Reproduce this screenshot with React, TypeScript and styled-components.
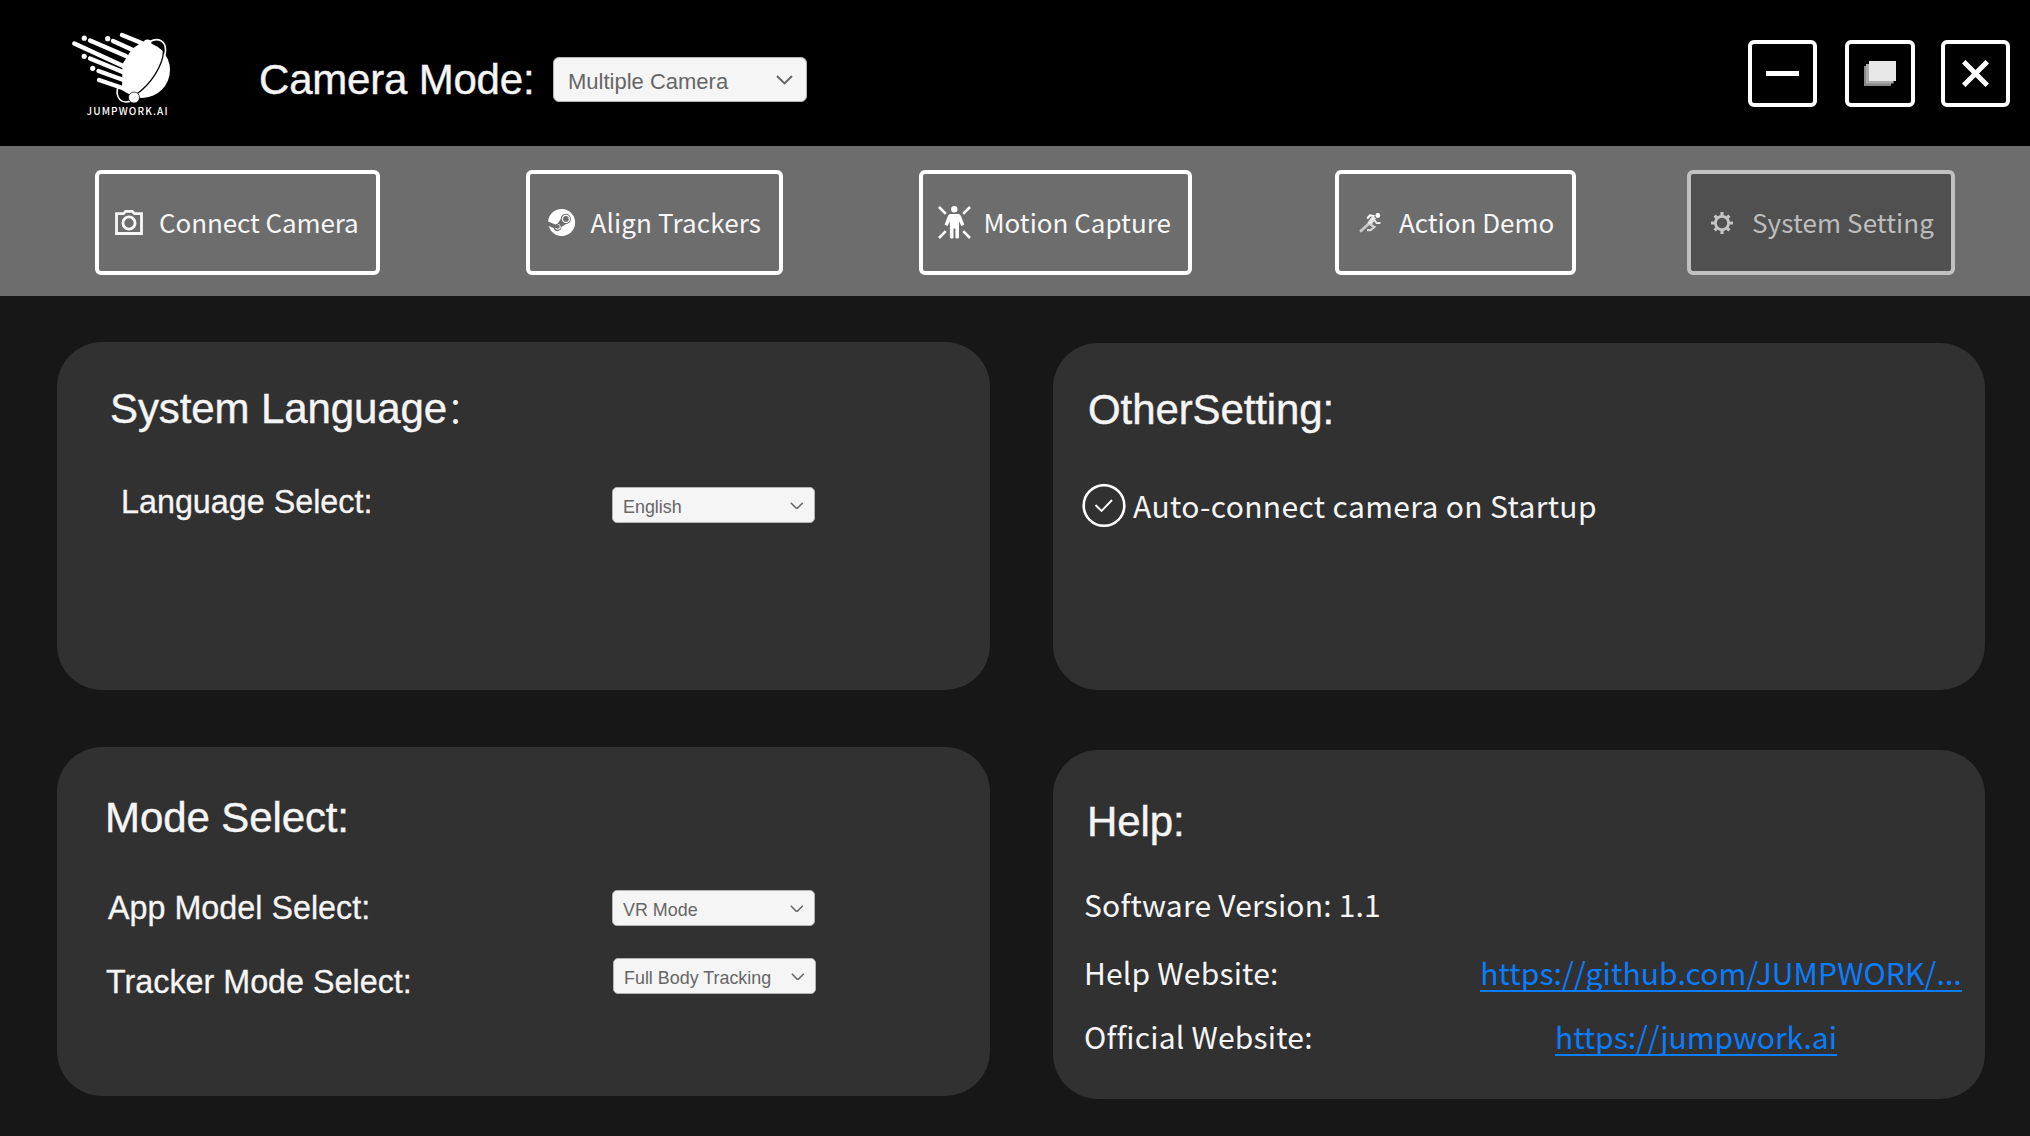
import React from "react";
import styled, { createGlobalStyle } from "styled-components";

const SANS = `"Liberation Sans", Arial, sans-serif`;
const HAN = `"Noto Sans CJK SC", "Noto Sans", sans-serif`;

const Global = createGlobalStyle`
  * { box-sizing: border-box; }
  html, body { margin: 0; padding: 0; background: #171717; }
`;

const Window = styled.div`
  width: 2030px;
  height: 1136px;
  display: flex;
  flex-direction: column;
  background: #171717;
  overflow: hidden;
  font-family: ${SANS};
  color: #f5f5f5;
  white-space: nowrap;
`;

const Header = styled.header`
  height: 146px;
  flex: none;
  background: #000;
  display: flex;
  align-items: flex-start;
`;

const Logo = styled.svg`
  width: 140px;
  height: 110px;
  margin: 20px 0 0 50px;
  flex: none;
`;

const ModeLabel = styled.div`
  width: 294px;
  margin: 55px 0 0 69px;
  font-size: 42px;
  line-height: 50px;
  letter-spacing: -0.2px;
  -webkit-text-stroke: 0.4px currentColor;
`;

const WindowButtons = styled.div`
  display: flex;
  gap: 27px;
  margin: 40px 20px 0 auto;
`;

const WindowButton = styled.button`
  width: 69px;
  height: 67px;
  padding: 0;
  border: 4px solid #fff;
  border-radius: 6px;
  background: #000;
  display: flex;
  align-items: center;
  justify-content: center;

  &:nth-child(2) {
    width: 70px;
    margin: 0 -1px 0 1px;
  }
`;

const Select = styled.div<{ $large?: boolean }>`
  width: ${(p) => (p.$large ? 254 : 203)}px;
  height: ${(p) => (p.$large ? 45 : 36)}px;
  padding: ${(p) => (p.$large ? "5px 13px 0 14px" : "4px 10px 0 10px")};
  display: flex;
  align-items: center;
  justify-content: space-between;
  flex: none;
  background: #f5f5f5;
  border: 1px solid #b4b4b4;
  border-radius: ${(p) => (p.$large ? 6 : 5)}px;
  color: #666;
  font-size: ${(p) => (p.$large ? 22 : 17.9)}px;
  line-height: 30px;

  svg {
    width: ${(p) => (p.$large ? 17 : 13.6)}px;
    margin-bottom: ${(p) => (p.$large ? 4 : 3)}px;
  }
`;

const HeaderSelect = styled.div`
  margin-top: 57px;
`;

const Nav = styled.nav`
  height: 150px;
  flex: none;
  background: #6d6d6d;
  display: flex;
  padding: 24px 0 0 95px;
`;

interface TabProps {
  $width: number;
  $after?: number;
  $pad: number;
  $gap: number;
  $spacing?: number;
  $active?: boolean;
}

const Tab = styled.button<TabProps>`
  width: ${(p) => p.$width}px;
  height: 105px;
  margin: 0 ${(p) => p.$after ?? 0}px 0 0;
  padding: 0 0 0 ${(p) => p.$pad}px;
  flex: none;
  display: flex;
  align-items: center;
  gap: ${(p) => p.$gap}px;
  border: 4px solid ${(p) => (p.$active ? "#c1c1c1" : "#fff")};
  border-radius: 6px;
  background: ${(p) => (p.$active ? "#505050" : "transparent")};
  color: ${(p) => (p.$active ? "#bdbdbd" : "#f7f7f7")};
  font-family: ${HAN};
  font-size: 26px;
  line-height: 38px;
  letter-spacing: ${(p) => p.$spacing ?? 0}px;

  svg { flex: none; display: block; }
`;

const TabText = styled.span`
  margin-top: -1px;
`;

const Panels = styled.main`
  flex: 1;
  display: flex;
  gap: 63px;
  padding-left: 57px;
`;

const Column = styled.div<{ $top: number; $gap: number }>`
  display: flex;
  flex-direction: column;
  gap: ${(p) => p.$gap}px;
  padding-top: ${(p) => p.$top}px;
`;

const Card = styled.section<{ $height: number; $width?: number }>`
  width: ${(p) => p.$width ?? 933}px;
  height: ${(p) => p.$height}px;
  flex: none;
  background: #313131;
  border-radius: 45px;
`;

const Title = styled.h2<{ $top: number; $left: number }>`
  margin: 0;
  padding: ${(p) => p.$top}px 0 0 ${(p) => p.$left}px;
  height: ${(p) => p.$top + 50}px;
  font-size: 42px;
  font-weight: 400;
  line-height: 50px;
  letter-spacing: -0.1px;
  -webkit-text-stroke: 0.4px currentColor;
`;

const WideColon = styled.span`
  margin-left: -1px;
  font-family: ${HAN};
  font-size: 38px;
  font-weight: 300;
  line-height: 1;
  -webkit-text-stroke: 0;
`;

const Row = styled.div<{ $top: number; $left: number }>`
  display: flex;
  align-items: flex-start;
  height: 40px;
  margin-top: ${(p) => p.$top}px;
  padding-left: ${(p) => p.$left}px;
`;

const Label = styled.div<{ $width: number }>`
  width: ${(p) => p.$width}px;
  flex: none;
  font-size: 32.3px;
  line-height: 40px;
  -webkit-text-stroke: 0.3px currentColor;
`;

const SelectSlot = styled.div<{ $top: number }>`
  margin-top: ${(p) => p.$top}px;
`;

const HanText = styled.div<{ $width?: number; $spacing?: number }>`
  width: ${(p) => (p.$width ? `${p.$width}px` : "auto")};
  flex: none;
  font-family: ${HAN};
  font-size: 30px;
  line-height: 40px;
  letter-spacing: ${(p) => p.$spacing ?? 0.2}px;
`;

const LinkSlot = styled.div`
  width: 482px;
  display: flex;
  justify-content: center;
`;

const Link = styled.a<{ $spacing: number }>`
  height: 40px;
  font-family: ${HAN};
  font-size: 30px;
  line-height: 40px;
  letter-spacing: ${(p) => p.$spacing}px;
  color: #0a7dff;
  border-bottom: 2px solid #0a7dff;
`;

const CheckIcon = styled.svg`
  width: 44px;
  height: 44px;
  flex: none;
  margin: -1px 7.5px 0 -0.5px;
`;

const Chevron = () => (
  <svg viewBox="0 0 17 10" fill="none" stroke="#666" strokeWidth="1.9">
    <path d="M1 1l7.500 7.500L16 1" />
  </svg>
);

const CameraIcon = () => (
  <svg width="28" height="25" viewBox="0 0 28 25" fill="none" stroke="#f7f7f7" strokeWidth="2.800">
    <path d="M1.500 3.600h7l2.200-2.300h6.600l2.200 2.300h7v19.900h-25z" />
    <circle cx="14" cy="13" r="6.100" />
  </svg>
);

const SteamIcon = () => (
  <svg width="27" height="27" viewBox="0 0 27 27">
    <path fill="#fff" d="M13.500 0A13.500 13.500 0 0 0 .1 12.400l7.200 3a3.800 3.800 0 0 1 2.200-.7l3.200-4.700A5.100 5.100 0 1 1 17.900 15l-4.600 3.300a3.800 3.800 0 0 1-7.500.9L.7 17A13.500 13.500 0 1 0 13.500 0z" />
    <circle cx="17.900" cy="9.900" r="3.500" fill="none" stroke="#fff" strokeWidth="1.300" />
    <path d="M7 18.700l2 .8a2 2 0 0 0 1.500-3.800l-1.500-.6a2.900 2.900 0 1 1-2 3.600z" fill="#fff" />
  </svg>
);

const MotionIcon = () => (
  <svg width="33" height="33" viewBox="0 0 33 33">
    <path d="M1 1l6.800 6.800M32 1l-6.800 6.800M1 32l6.800-6.800M32 32l-6.800-6.800" stroke="#fff" strokeWidth="2.600" />
    <circle cx="16.300" cy="3.300" r="3.200" fill="#fff" />
    <path fill="#fff" d="M12.500 8h7.800c1.500 0 2.600 1.500 3.200 3.200l2.800 7.600-2.900 1.200-2.400-4.800v16.300c0 1.300-3.600 1.300-3.600 0v-9h-1.900v9c0 1.300-3.600 1.300-3.600 0V15.200L9.500 20l-2.900-1.200 2.800-7.600C10 9.500 11 8 12.500 8z" />
  </svg>
);

const RunnerIcon = () => (
  <svg width="22" height="20" viewBox="0 0 22 20" fill="none" stroke="#e8e8e8">
    <circle cx="18.800" cy="2.500" r="2.400" fill="#fff" stroke="none" />
    <path d="M8.200 5.500l2.800-3.200 4.500 1" strokeWidth="2" stroke="#fff" />
    <path d="M15.200 4L10 11.500" strokeWidth="4.600" />
    <path d="M15.500 7l2 3h4" strokeWidth="1.800" />
    <path d="M10.500 11l5 3-4 3.200H8" strokeWidth="2.200" stroke="#d4d4d4" />
    <path d="M9.500 11L1 18.800" strokeWidth="2.800" stroke="#c8c8c8" />
  </svg>
);

const GearIcon = () => (
  <svg width="22" height="22" viewBox="0 0 22 22" fill="none" stroke="#c4c4c4">
    <circle cx="11" cy="11" r="6.600" strokeWidth="2.800" />
    <path d="M11 0v4M11 18v4M0 11h4M18 11h4M3.600 3.600l2.600 2.600M15.800 15.800l2.600 2.600M3.600 18.400l2.600-2.600M15.800 6.200l2.600-2.600" strokeWidth="3.200" />
  </svg>
);

const MinimizeIcon = () => (
  <svg width="33" height="33" viewBox="0 0 33 33">
    <path d="M0 14h33v5H0z" fill="#fff" />
  </svg>
);

const RestoreIcon = () => (
  <svg width="32" height="25" viewBox="0 0 32 25">
    <path d="M0 5h27v20H0z" fill="#888" />
    <path d="M2 3h27.500v19.500H2z" fill="#ababab" />
    <path d="M5 0h27v20H5z" fill="#e8e8e8" />
  </svg>
);

const CloseIcon = () => (
  <svg width="27" height="27" viewBox="0 0 27 27">
    <path d="M1.700 1.700l23.600 23.600M25.300 1.700L1.700 25.300" stroke="#fff" strokeWidth="5" />
  </svg>
);

const BrandLogo = () => (
  <Logo viewBox="0 0 140 110">
    <path
      d="M72 15l22 9M63 21l22 10M40 20.500l36 15.500M24.300 23.500l50 23M40 38.500l34 14M48.500 51l25 9M49 60l25 8.500"
      stroke="#fff"
      strokeWidth="4.400"
      strokeLinecap="round"
    />
    <g fill="#fff">
      <circle cx="34.300" cy="18.200" r="2.600" />
      <circle cx="57.700" cy="18.700" r="2.600" />
      <circle cx="34.200" cy="36.300" r="2.600" />
      <circle cx="42.700" cy="48.300" r="2.600" />
      <circle cx="97.500" cy="23.500" r="4" />
      <path d="M92 22a28 28 0 1 1 0 56c-6 0-14-4-20-8l.500-26L82 29z" />
    </g>
    <path d="M100 21.500c8-4.500 16-.5 15.500 9 0 2-.5 4-1 6M68 67c-2.500 8 1 15 8 15 2 0 4-.6 6-1.500" fill="none" stroke="#fff" strokeWidth="1.600" />
    <path d="M113.500 31C113 46 100 65 86 74.500" fill="none" stroke="#000" strokeWidth="1.300" />
    <circle cx="84" cy="77.500" r="5.500" fill="#fff" stroke="#000" strokeWidth="0.700" />
    <text x="36.500" y="95" textLength="81" fontFamily="Noto Sans CJK SC, sans-serif" fontWeight="500" fontSize="10" fill="#fff">JUMPWORK.AI</text>
  </Logo>
);

export default function App() {
  return (
    <Window>
      <Global />
      <Header>
        <BrandLogo />
        <ModeLabel>Camera Mode:</ModeLabel>
        <HeaderSelect>
          <Select $large>Multiple Camera<Chevron /></Select>
        </HeaderSelect>
        <WindowButtons>
          <WindowButton aria-label="Minimize"><MinimizeIcon /></WindowButton>
          <WindowButton aria-label="Restore"><RestoreIcon /></WindowButton>
          <WindowButton aria-label="Close"><CloseIcon /></WindowButton>
        </WindowButtons>
      </Header>
      <Nav>
        <Tab $width={285} $after={146} $pad={16} $gap={16} $spacing={-0.08}><CameraIcon /><TabText>Connect Camera</TabText></Tab>
        <Tab $width={257} $after={136} $pad={17.5} $gap={16} $spacing={0.15}><SteamIcon /><TabText>Align Trackers</TabText></Tab>
        <Tab $width={273} $after={143} $pad={14.5} $gap={13}><MotionIcon /><TabText>Motion Capture</TabText></Tab>
        <Tab $width={241} $after={111} $pad={19.5} $gap={18.5}><RunnerIcon /><TabText>Action Demo</TabText></Tab>
        <Tab $width={268} $pad={20} $gap={19} $spacing={0.1} $active><GearIcon /><TabText>System Setting</TabText></Tab>
      </Nav>
      <Panels>
        <Column $top={46} $gap={57}>
          <Card $height={348}>
            <Title $top={42} $left={53}>System Language<WideColon>：</WideColon></Title>
            <Row $top={48} $left={64}>
              <Label $width={491}>Language Select:</Label>
              <SelectSlot $top={5}><Select>English<Chevron /></Select></SelectSlot>
            </Row>
          </Card>
          <Card $height={349}>
            <Title $top={46} $left={48}>Mode Select:</Title>
            <Row $top={45} $left={51}>
              <Label $width={504}>App Model Select:</Label>
              <SelectSlot $top={2}><Select>VR Mode<Chevron /></Select></SelectSlot>
            </Row>
            <Row $top={34} $left={49}>
              <Label $width={507}>Tracker Mode Select:</Label>
              <SelectSlot $top={-4}><Select>Full Body Tracking<Chevron /></Select></SelectSlot>
            </Row>
          </Card>
        </Column>
        <Column $top={47} $gap={60}>
          <Card $height={347} $width={932}>
            <Title $top={42} $left={35}>OtherSetting:</Title>
            <Row $top={50} $left={29}>
              <CheckIcon viewBox="0 0 44 44" fill="none" stroke="#fff">
                <circle cx="22" cy="21.500" r="20.300" strokeWidth="2.600" />
                <path d="M13.500 21l6 6L30 16" strokeWidth="1.900" />
              </CheckIcon>
              <HanText $spacing={0.36}>Auto-connect camera on Startup</HanText>
            </Row>
          </Card>
          <Card $height={349} $width={932}>
            <Title $top={47} $left={34}>Help:</Title>
            <Row $top={37} $left={31}><HanText>Software Version: 1.1</HanText></Row>
            <Row $top={28} $left={31}>
              <HanText $width={396}>Help Website:</HanText>
              <LinkSlot><Link $spacing={0.13}>https://github.com/JUMPWORK/...</Link></LinkSlot>
            </Row>
            <Row $top={24} $left={31}>
              <HanText $width={371}>Official Website:</HanText>
              <LinkSlot><Link $spacing={-0.03}>https://jumpwork.ai</Link></LinkSlot>
            </Row>
          </Card>
        </Column>
      </Panels>
    </Window>
  );
}
